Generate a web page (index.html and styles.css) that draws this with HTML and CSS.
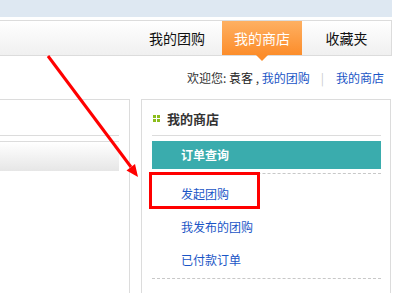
FILE: index.html
```html
<!DOCTYPE html>
<html>
    <head>
        <title>我的商店</title>
        <meta charset="UTF-8">
        <meta name="viewport" content="width=device-width, initial-scale=1.0">
        <link rel="stylesheet" href="styles.css">
    </head>
    <body>
        <div class="page">
            <div class="topbar"></div>
            <div class="nav">
                <a class="nav-item">我的团购</a>
                <a class="nav-item nav-active">我的商店</a>
                <a class="nav-item nav-last">收藏夹</a>
            </div>
            <div class="welcome">
                欢迎您: <b class="user">袁客</b>&nbsp;,&nbsp;<a>我的团购</a><span class="sep">|</span><a>我的商店</a>
            </div>
            <div class="main">
                <div class="left-col">
                    <div class="left-head"></div>
                    <div class="left-bar"></div>
                </div>
                <div class="side">
                    <div class="side-title">
                        <svg class="side-icon" width="7" height="7" viewBox="0 0 7 7">
                            <rect x="0" y="0" width="3" height="3" fill="#8cbd1c"/>
                            <rect x="4" y="0" width="3" height="3" fill="#8cbd1c"/>
                            <rect x="0" y="4" width="3" height="3" fill="#8cbd1c"/>
                            <rect x="4" y="4" width="3" height="3" fill="#8cbd1c"/>
                        </svg>
                        我的商店
                    </div>
                    <div class="side-current">订单查询</div>
                    <ul class="side-links">
                        <li><a>发起团购</a></li>
                        <li><a>我发布的团购</a></li>
                        <li><a>已付款订单</a></li>
                    </ul>
                </div>
            </div>
            <!-- annotation -->
            <div class="mark-box"></div>
            <svg class="mark-arrow" width="397" height="293" viewBox="0 0 397 293">
                <line x1="48" y1="56" x2="131" y2="167" stroke="#ff0000" stroke-width="3"/>
                <polygon points="138,177 126.5,170.5 135,164" fill="#ff0000"/>
            </svg>
        </div>
    </body>
</html>
```

FILE: styles.css
```css
* {
  margin: 0;
  padding: 0;
  box-sizing: border-box;
}

body {
  font-family: "Noto Sans CJK SC", "DejaVu Sans", sans-serif;
  background-color: #fff;
  width: 397px;
  height: 293px;
  overflow: hidden;
}

a {
  text-decoration: none;
  cursor: pointer;
}

.page {
  position: relative;
  width: 392px;
  height: 293px;
}

.topbar {
  height: 17px;
  background-color: #dee8f2;
  margin-bottom: 3px;
}

.nav {
  display: flex;
  justify-content: flex-end;
  height: 36px;
  border: 1px solid #dcdcdc;
  border-left: none;
  background: linear-gradient(#ffffff, #f0f0f0);
}

.nav-item {
  position: relative;
  width: 90px;
  line-height: 35px;
  text-align: center;
  font-size: 14px;
  color: #111;
}

.nav-last {
  width: 89px;
}

.nav-active {
  width: 80px;
  color: #fff;
  background: linear-gradient(#feb062, #fc8d2b);
}

.nav-active::after {
  content: "";
  position: absolute;
  left: 34px;
  bottom: -6px;
  border-left: 6px solid transparent;
  border-right: 6px solid transparent;
  border-top: 6px solid #fc8d2b;
}

.welcome {
  height: 43px;
  line-height: 43px;
  text-align: right;
  padding-right: 8px;
  font-size: 12px;
  color: #333;
}

.welcome .user {
  font-weight: normal;
  color: #222;
}

.welcome a {
  color: #1a55c6;
}

.welcome .sep {
  color: #ccc;
  margin: 0 12px 0 11px;
}

.main {
  display: flex;
  gap: 11px;
}

.left-col {
  width: 130px;
  height: 200px;
  border: 1px solid #dcdcdc;
  border-left: none;
  padding-right: 10px;
}

.left-head {
  height: 36px;
  border-bottom: 1px solid #dcdcdc;
  margin-bottom: 5px;
}

.left-bar {
  height: 30px;
  border-top: 1px solid #dcdcdc;
  background: linear-gradient(#ffffff, #e6e6e6);
}

.side {
  width: 250px;
  height: 200px;
  border: 1px solid #dcdcdc;
  padding: 0 9px 0 10px;
}

.side-title {
  display: flex;
  align-items: center;
  gap: 7px;
  height: 36px;
  padding-top: 2px;
  border-bottom: 1px solid #dcdcdc;
  font-size: 13px;
  font-weight: 700;
  color: #333;
  padding-left: 1px;
}

.side-current {
  margin-top: 5px;
  height: 28px;
  line-height: 28px;
  padding-left: 29px;
  background-color: #3aacad;
  color: #fff;
  font-size: 12px;
  font-weight: 700;
}

.side-links {
  list-style: none;
  margin-top: 4px;
  padding: 3px 0 2px 29px;
  border-top: 1px dashed #c8c8c8;
  border-bottom: 1px dashed #c8c8c8;
}

.side-links li {
  line-height: 33px;
  font-size: 12px;
}

.side-links a {
  color: #1a55c6;
}

.mark-box {
  position: absolute;
  left: 149px;
  top: 172px;
  width: 111px;
  height: 37px;
  border: 3px solid #ff0000;
}

.mark-arrow {
  position: absolute;
  left: 0;
  top: 0;
  pointer-events: none;
}
```
